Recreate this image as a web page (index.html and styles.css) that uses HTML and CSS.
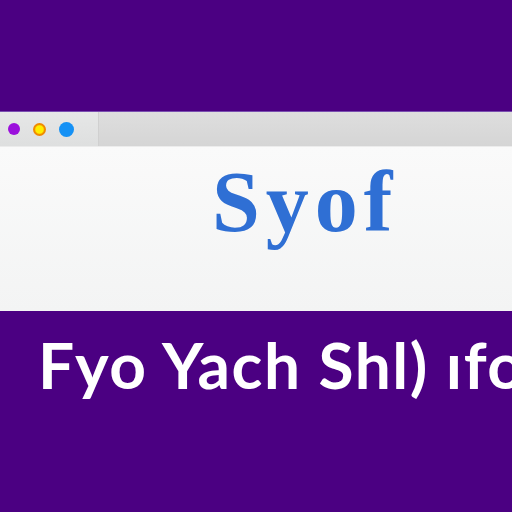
FILE: index.html
```html
<!DOCTYPE html>
<html lang="en">
<head>
    <meta charset="UTF-8">
    <meta name="viewport" content="width=device-width, initial-scale=1.0">
    <title>Syof</title>
    <link rel="stylesheet" href="styles.css">
</head>
<body>
    <div class="window">
        <div class="toolbar">
            <div class="tab">
                <span class="dot purple"></span>
                <span class="dot orange"></span>
                <span class="dot blue"></span>
            </div>
            <div class="bar"></div>
        </div>
        <div class="content">
            <h1 class="logo">Syof</h1>
        </div>
    </div>
    <p class="caption">Fyo Yach Shl) ıfor</p>
</body>
</html>
```

FILE: styles.css
```css
html, body {
    margin: 0;
    height: 100%;
}
body {
    background-color: #4b0082;
    overflow: hidden;
    padding-top: 111px;
    box-sizing: border-box;
}
.window {
    display: flex;
    flex-direction: column;
    height: 200px;
}
.toolbar {
    display: flex;
    height: 34px;
    border-top: 1px solid #7a4fb0;
}
.tab {
    width: 99px;
    box-sizing: border-box;
    display: flex;
    align-items: center;
    gap: 13px;
    padding-left: 8px;
    background: linear-gradient(#e6e7e7, #dedfdf);
    border-right: 1px solid #d0d0d0;
}
.bar {
    flex: 1;
    background: linear-gradient(#dedede, #d5d5d5);
}
.dot {
    width: 12px;
    height: 12px;
    border-radius: 50%;
}
.purple {
    background-color: #9b10dc;
}
.orange {
    width: 13px;
    height: 13px;
    background: radial-gradient(circle, #ffee00 0 40%, #f08a00 55%);
}
.blue {
    width: 15px;
    height: 15px;
    background-color: #1591f5;
}
.content {
    flex: 1;
    background: linear-gradient(#fafafa, #f3f4f4);
    border-top: 1px solid #ececec;
    padding-left: 212px;
}
.logo {
    margin: 12px 0 0;
    font-family: "Liberation Serif", serif;
    font-weight: bold;
    font-size: 86px;
    letter-spacing: 6px;
    color: #2f6fd4;
    line-height: 1;
}
.caption {
    margin: 22px 0 0 38px;
    font-family: Lato, sans-serif;
    font-weight: 700;
    font-size: 64px;
    letter-spacing: 1.5px;
    line-height: 1;
    color: #fff;
    white-space: nowrap;
}
```
